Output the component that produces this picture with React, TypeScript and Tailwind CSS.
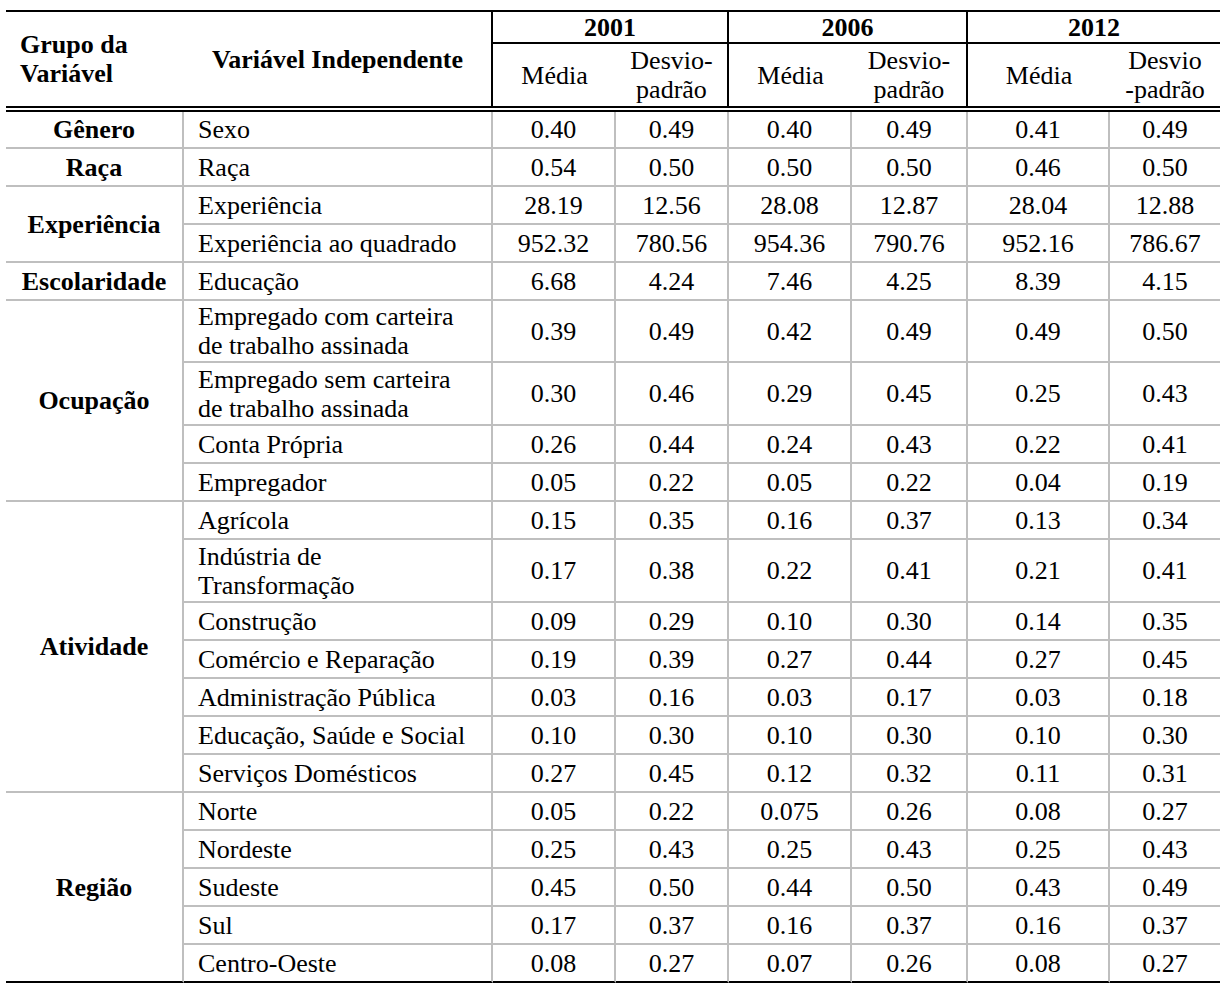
import React from "react";

type Row = { label: React.ReactNode; h: string; v: string[] };
type Group = { name: string; span: string; rows: Row[] };

const cols =
  "grid grid-cols-[178px_309px_123px_113px_123px_116px_142px_110px]";

const groups: Group[] = [
  {
    name: "Gênero",
    span: "row-span-1",
    rows: [{ label: "Sexo", h: "h-[37px]", v: ["0.40", "0.49", "0.40", "0.49", "0.41", "0.49"] }],
  },
  {
    name: "Raça",
    span: "row-span-1",
    rows: [{ label: "Raça", h: "h-[38px]", v: ["0.54", "0.50", "0.50", "0.50", "0.46", "0.50"] }],
  },
  {
    name: "Experiência",
    span: "row-span-2",
    rows: [
      { label: "Experiência", h: "h-[38px]", v: ["28.19", "12.56", "28.08", "12.87", "28.04", "12.88"] },
      { label: "Experiência ao quadrado", h: "h-[38px]", v: ["952.32", "780.56", "954.36", "790.76", "952.16", "786.67"] },
    ],
  },
  {
    name: "Escolaridade",
    span: "row-span-1",
    rows: [{ label: "Educação", h: "h-[38px]", v: ["6.68", "4.24", "7.46", "4.25", "8.39", "4.15"] }],
  },
  {
    name: "Ocupação",
    span: "row-span-4",
    rows: [
      {
        label: (
          <>
            Empregado com carteira
            <br />
            de trabalho assinada
          </>
        ),
        h: "h-[62px]",
        v: ["0.39", "0.49", "0.42", "0.49", "0.49", "0.50"],
      },
      {
        label: (
          <>
            Empregado sem carteira
            <br />
            de trabalho assinada
          </>
        ),
        h: "h-[63px]",
        v: ["0.30", "0.46", "0.29", "0.45", "0.25", "0.43"],
      },
      { label: "Conta Própria", h: "h-[38px]", v: ["0.26", "0.44", "0.24", "0.43", "0.22", "0.41"] },
      { label: "Empregador", h: "h-[38px]", v: ["0.05", "0.22", "0.05", "0.22", "0.04", "0.19"] },
    ],
  },
  {
    name: "Atividade",
    span: "row-span-7",
    rows: [
      { label: "Agrícola", h: "h-[38px]", v: ["0.15", "0.35", "0.16", "0.37", "0.13", "0.34"] },
      {
        label: (
          <>
            Indústria de
            <br />
            Transformação
          </>
        ),
        h: "h-[63px]",
        v: ["0.17", "0.38", "0.22", "0.41", "0.21", "0.41"],
      },
      { label: "Construção", h: "h-[38px]", v: ["0.09", "0.29", "0.10", "0.30", "0.14", "0.35"] },
      { label: "Comércio e Reparação", h: "h-[38px]", v: ["0.19", "0.39", "0.27", "0.44", "0.27", "0.45"] },
      { label: "Administração Pública", h: "h-[38px]", v: ["0.03", "0.16", "0.03", "0.17", "0.03", "0.18"] },
      { label: "Educação, Saúde e Social", h: "h-[38px]", v: ["0.10", "0.30", "0.10", "0.30", "0.10", "0.30"] },
      { label: "Serviços Domésticos", h: "h-[38px]", v: ["0.27", "0.45", "0.12", "0.32", "0.11", "0.31"] },
    ],
  },
  {
    name: "Região",
    span: "row-span-5",
    rows: [
      { label: "Norte", h: "h-[38px]", v: ["0.05", "0.22", "0.075", "0.26", "0.08", "0.27"] },
      { label: "Nordeste", h: "h-[38px]", v: ["0.25", "0.43", "0.25", "0.43", "0.25", "0.43"] },
      { label: "Sudeste", h: "h-[38px]", v: ["0.45", "0.50", "0.44", "0.50", "0.43", "0.49"] },
      { label: "Sul", h: "h-[38px]", v: ["0.17", "0.37", "0.16", "0.37", "0.16", "0.37"] },
      { label: "Centro-Oeste", h: "h-[38px]", v: ["0.08", "0.27", "0.07", "0.26", "0.08", "0.27"] },
    ],
  },
];

const Header = () => (
  <>
    <div className={cols}>
      <div className="row-span-2 flex items-center pl-[14px] font-bold">
        <div>
          Grupo da
          <br />
          Variável
        </div>
      </div>
      <div className="row-span-2 flex items-center justify-center font-bold border-r-2 border-r-black">
        Variável Independente
      </div>
      {["2001", "2006", "2012"].map((y, i) => (
        <div
          key={y}
          className={
            "col-span-2 h-[32px] flex items-center justify-center font-bold border-b-2 border-b-black" +
            (i < 2 ? " border-r-2 border-r-black" : "")
          }
        >
          {y}
        </div>
      ))}
      {[0, 1, 2].map((i) => (
        <React.Fragment key={i}>
          <div className="h-[62px] flex items-center justify-center">Média</div>
          <div
            className={
              "h-[62px] flex items-center justify-center text-center" +
              (i < 2 ? " border-r-2 border-r-black" : "")
            }
          >
            {i < 2 ? (
              <div>
                Desvio-
                <br />
                padrão
              </div>
            ) : (
              <div>
                Desvio
                <br />
                -padrão
              </div>
            )}
          </div>
        </React.Fragment>
      ))}
    </div>
    <div className="h-[6px] border-y-2 border-black" />
  </>
);

export default function App() {
  return (
    <div className="min-h-screen bg-white pt-[10px] pl-[6px] [font-family:'Liberation_Serif','Times_New_Roman',serif] text-[26px] leading-[29px] text-black">
      <div className="w-[1214px] border-t-2 border-black">
        <Header />
        <div className={cols}>
          {groups.map((g, gi) => {
            const lastGroup = gi === groups.length - 1;
            return (
              <React.Fragment key={g.name}>
                <div
                  className={
                    g.span +
                    " flex items-center justify-center font-bold border-r-2 border-r-[#bfbfbf] border-b-2" +
                    (lastGroup ? " border-b-black" : " border-b-[#bfbfbf]")
                  }
                >
                  {g.name}
                </div>
                {g.rows.map((r, ri) => {
                  const bottom =
                    lastGroup && ri === g.rows.length - 1
                      ? " border-b-2 border-b-black"
                      : " border-b-2 border-b-[#bfbfbf]";
                  return (
                    <React.Fragment key={ri}>
                      <div
                        className={
                          r.h +
                          " flex items-center pl-[14px] border-r-2 border-r-[#bfbfbf]" +
                          bottom
                        }
                      >
                        <div>{r.label}</div>
                      </div>
                      {r.v.map((n, ni) => (
                        <div
                          key={ni}
                          className={
                            r.h +
                            " flex items-center justify-center" +
                            (ni < 5 ? " border-r-2 border-r-[#bfbfbf]" : "") +
                            bottom
                          }
                        >
                          {n}
                        </div>
                      ))}
                    </React.Fragment>
                  );
                })}
              </React.Fragment>
            );
          })}
        </div>
      </div>
    </div>
  );
}
